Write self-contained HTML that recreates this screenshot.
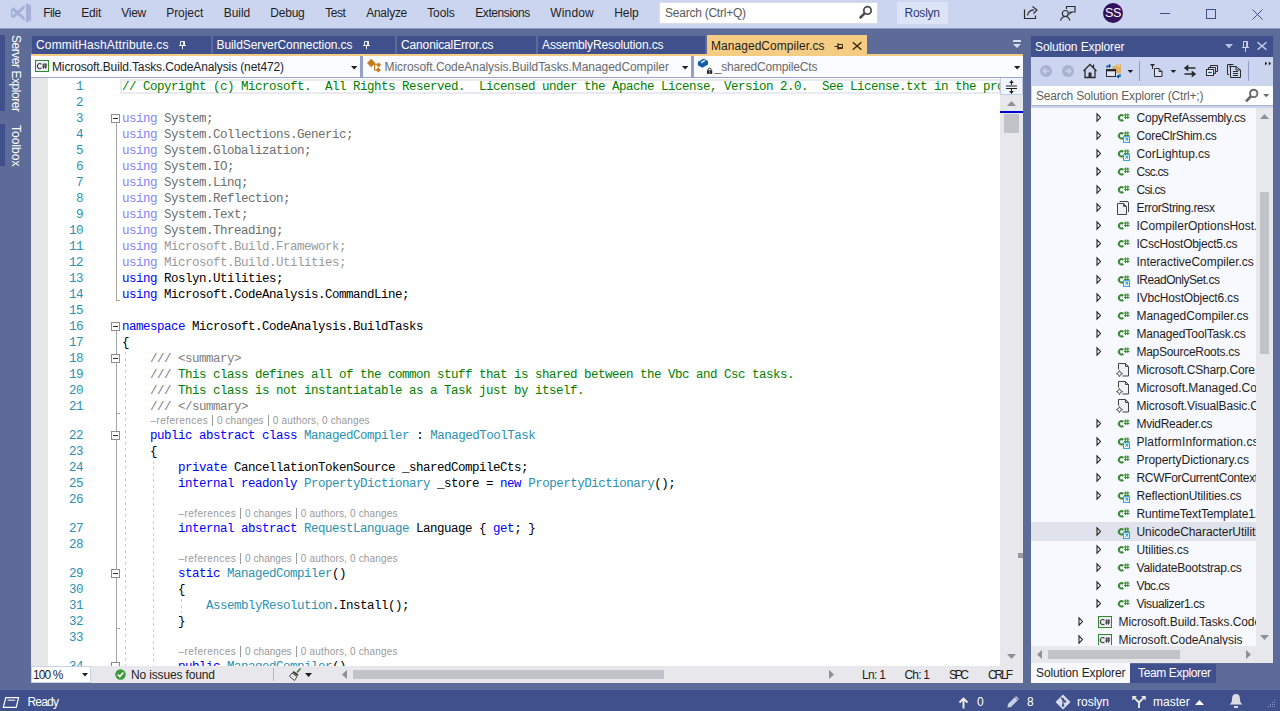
<!DOCTYPE html>
<html><head><meta charset="utf-8"><title>VS</title><style>
*{box-sizing:border-box;margin:0;padding:0}
html,body{width:1280px;height:711px;overflow:hidden;background:#5D6B99;font-family:"Liberation Sans",sans-serif;font-size:12px;color:#1e1e1e}
.a{position:absolute;white-space:pre}
#title{left:0;top:0;width:1280px;height:28px;background:#CCD5F0}
.menu{top:5px;font-size:12.4px;color:#1e1e1e;line-height:16px}
.code{position:absolute;left:122px;height:16px;margin-top:1px;line-height:16px;white-space:pre;font-family:"Liberation Mono",monospace;font-size:12.5px;letter-spacing:-0.501px;color:#000}
.ln{position:absolute;left:40px;width:43px;text-align:right;height:16px;margin-top:1px;line-height:16px;font-family:"Liberation Mono",monospace;font-size:12.5px;letter-spacing:-0.501px;color:#2B91AF}
.k{color:#0000FF}.ty{color:#2B91AF}.c{color:#008000}.x{color:#808080}
.fk{color:#8585FF}.fn{color:#6E6E6E}.fh{color:#9B9B9B}
.lens{position:absolute;height:13px;line-height:13px;font-size:9.6px;color:#8c8c8c;white-space:pre}
.tab{position:absolute;top:36px;height:18px;background:#40508D;color:#fff;font-size:12px;line-height:18px;white-space:pre}
.tree{position:absolute;left:1136px;height:18px;line-height:18px;font-size:12px;color:#1e1e1e;white-space:pre}
.sb{position:absolute;top:693px;height:16px;line-height:16px;font-size:12px;color:#fff;white-space:pre}
.br{position:absolute;top:667px;height:16px;line-height:16px;font-size:12px;color:#1e1e1e;white-space:pre}
</style></head><body>
<div class="a" id="title"></div>
<svg class="a" style="left:0;top:0" width="40" height="28" viewBox="0 0 40 28"><g fill="#A4B0D5"><path d="M26 3 L31 5.600 V20.200 L26 22.800 Z"/><path d="M11.300 9.200 L13.400 7.300 L24.600 17.300 V21 Z"/><path d="M11.300 16.600 L24.600 4.800 V8.500 L13.400 18.500 Z"/><path d="M10.800 9.400 L12.400 8.600 V17.200 L10.800 16.400 Z"/></g></svg>
<div class="a" style="left:43.20px;top:5px;font-size:12px;line-height:16px;color:#1e1e1e;letter-spacing:-0.411px;">File</div>
<div class="a" style="left:81.20px;top:5px;font-size:12px;line-height:16px;color:#1e1e1e;letter-spacing:-0.192px;">Edit</div>
<div class="a" style="left:121.20px;top:5px;font-size:12px;line-height:16px;color:#1e1e1e;letter-spacing:-0.241px;">View</div>
<div class="a" style="left:166.20px;top:5px;font-size:12px;line-height:16px;color:#1e1e1e;letter-spacing:-0.041px;">Project</div>
<div class="a" style="left:223.70px;top:5px;font-size:12px;line-height:16px;color:#1e1e1e;letter-spacing:-0.022px;">Build</div>
<div class="a" style="left:270.20px;top:5px;font-size:12px;line-height:16px;color:#1e1e1e;letter-spacing:-0.191px;">Debug</div>
<div class="a" style="left:325.20px;top:5px;font-size:12px;line-height:16px;color:#1e1e1e;letter-spacing:-0.469px;">Test</div>
<div class="a" style="left:366.20px;top:5px;font-size:12px;line-height:16px;color:#1e1e1e;letter-spacing:-0.266px;">Analyze</div>
<div class="a" style="left:427.20px;top:5px;font-size:12px;line-height:16px;color:#1e1e1e;letter-spacing:-0.102px;">Tools</div>
<div class="a" style="left:475.20px;top:5px;font-size:12px;line-height:16px;color:#1e1e1e;letter-spacing:-0.400px;">Extensions</div>
<div class="a" style="left:550.20px;top:5px;font-size:12px;line-height:16px;color:#1e1e1e;letter-spacing:0.178px;">Window</div>
<div class="a" style="left:614.20px;top:5px;font-size:12px;line-height:16px;color:#1e1e1e;letter-spacing:-0.028px;">Help</div>
<div class="a" style="left:659px;top:2px;width:219px;height:21.5px;background:#fff;border:1px solid #D9DDEA"></div>
<div class="a" style="left:665.00px;top:5px;font-size:12px;line-height:16px;color:#5a5a5a;letter-spacing:-0.239px;">Search (Ctrl+Q)</div>
<svg class="a" style="left:858px;top:5px" width="15" height="15" viewBox="0 0 15 15"><circle cx="9.500" cy="5.400" r="3.700" fill="none" stroke="#4a4a4a" stroke-width="1.800"/><path d="M6.800 8.200 L1.800 13.200" stroke="#4a4a4a" stroke-width="2.600"/></svg>
<div class="a" style="left:897px;top:2px;width:51px;height:22px;background:#DCE3F6"></div>
<div class="a" style="left:904.50px;top:5px;font-size:12px;line-height:16px;color:#2a3a7a;letter-spacing:-0.237px;">Roslyn</div>
<svg class="a" style="left:1022px;top:5px" width="18" height="16" viewBox="0 0 18 16"><path d="M2.500 4.500 V13.500 H13.500 V10.500" fill="none" stroke="#2b2b2b" stroke-width="1.200"/><path d="M5.500 10.500 C6 7 8.500 5 12 4.800 M10.500 1.500 L15 5 L11.500 8.500" fill="none" stroke="#2b2b2b" stroke-width="1.200"/></svg>
<svg class="a" style="left:1059px;top:5px" width="18" height="17" viewBox="0 0 18 17"><circle cx="6.300" cy="8.500" r="3" fill="none" stroke="#2b2b2b" stroke-width="1.200"/><path d="M1.500 15.500 C2.500 12.500 4 11.500 6.300 11.500 C8.600 11.500 10 12.500 11 15.500" fill="none" stroke="#2b2b2b" stroke-width="1.200"/><path d="M7.500 4 V1.500 H16 V7 H12.500 L11 8.500 V7 H10.500" fill="none" stroke="#2b2b2b" stroke-width="1.200"/></svg>
<div class="a" style="left:1103px;top:3px;width:20px;height:20px;border-radius:10px;background:#33125C;color:#fff;font-size:12.5px;line-height:20px;text-align:center;letter-spacing:-0.300px">SS</div>
<div class="a" style="left:1160px;top:13px;width:10px;height:1px;background:#3F4F8C"></div>
<div class="a" style="left:1206px;top:9px;width:10px;height:10px;border:1px solid #3F4F8C"></div>
<svg class="a" style="left:1252px;top:9px" width="11" height="11" viewBox="0 0 11 11"><path d="M0.500 0.500 L10.500 10.500 M10.500 0.500 L0.500 10.500" stroke="#3F4F8C" stroke-width="1" fill="none"/></svg>
<div class="a" style="left:0;top:28px;width:1280px;height:1px;background:#8F9AC2"></div>
<div class="a" style="left:0;top:35px;width:5px;height:76px;background:#40508D"></div>
<div class="a" style="left:0;top:124px;width:5px;height:42px;background:#40508D"></div>
<div class="a" style="left:24.00px;top:35px;font-size:12px;line-height:16px;color:#fff;letter-spacing:-0.455px;transform-origin:0 0;transform:rotate(90deg);">Server Explorer</div>
<div class="a" style="left:24.00px;top:124.5px;font-size:12px;line-height:16px;color:#fff;letter-spacing:0.023px;transform-origin:0 0;transform:rotate(90deg);">Toolbox</div>
<div class="tab" style="left:32px;width:179px"></div>
<div class="a" style="left:36.00px;top:37px;font-size:12px;line-height:16px;color:#fff;letter-spacing:0.149px;">CommitHashAttribute.cs</div>
<svg class="a" style="left:178px;top:41px" width="9" height="11" viewBox="0 0 9 11"><path d="M2.500 0.500 H6.500 V4.500 H2.500 Z M5.600 0.500 V4.500 M1 4.500 H8 M4.500 4.500 V8.200" fill="none" stroke="#F0F4FF" stroke-width="1"/></svg>
<div class="tab" style="left:213px;width:182px"></div>
<div class="a" style="left:216.50px;top:37px;font-size:12px;line-height:16px;color:#fff;letter-spacing:-0.090px;">BuildServerConnection.cs</div>
<svg class="a" style="left:361.5px;top:41px" width="9" height="11" viewBox="0 0 9 11"><path d="M2.500 0.500 H6.500 V4.500 H2.500 Z M5.600 0.500 V4.500 M1 4.500 H8 M4.500 4.500 V8.200" fill="none" stroke="#F0F4FF" stroke-width="1"/></svg>
<div class="tab" style="left:397px;width:139px"></div>
<div class="a" style="left:401.00px;top:37px;font-size:12px;line-height:16px;color:#fff;letter-spacing:-0.138px;">CanonicalError.cs</div>
<div class="tab" style="left:538px;width:167px"></div>
<div class="a" style="left:542.00px;top:37px;font-size:12px;line-height:16px;color:#fff;letter-spacing:-0.127px;">AssemblyResolution.cs</div>
<div class="tab" style="left:707px;top:35px;width:160px;background:#F5CC84;height:21px"></div>
<div class="a" style="left:711.00px;top:38px;font-size:12px;line-height:16px;color:#1e1e1e;letter-spacing:0.045px;">ManagedCompiler.cs</div>
<svg class="a" style="left:834px;top:42px" width="11" height="9" viewBox="0 0 11 9"><path d="M8.500 2.500 V6.500 H4 V2.500 Z M8.500 5.600 H4 M4 1 V8 M4 4.500 H0.500" fill="none" stroke="#3a2a08" stroke-width="1"/></svg>
<svg class="a" style="left:852px;top:41px" width="11" height="11" viewBox="0 0 11 11"><path d="M0.800 1.200 L9.400 8.800 M9.400 1.200 L0.800 8.800" stroke="#3a2a08" stroke-width="1.400" fill="none"/></svg>
<svg class="a" style="left:1012px;top:39px" width="10" height="10" viewBox="0 0 10 10"><path d="M1 1 H9 V3 H1 Z M1 5 H9 L5 9 Z" fill="#D5DCF0"/></svg>
<div class="a" style="left:31px;top:54px;width:992px;height:2px;background:#F5CC84"></div>
<div class="a" style="left:31px;top:56px;width:992px;height:22px;background:#FBFCFF;border-bottom:1px solid #9AA6CF"></div>
<div class="a" style="left:360px;top:56px;width:3px;height:22px;background:#93A0CB"></div>
<div class="a" style="left:691px;top:56px;width:3px;height:22px;background:#93A0CB"></div>
<svg class="a" style="left:35px;top:60px" width="15" height="13" viewBox="0 0 15 13"><rect x="0.500" y="0.500" width="13" height="11" fill="#EDEDF5" stroke="#2F8A2F"/><path d="M6.400 4.300 A2.300 2.600 0 1 0 6.400 7.900" fill="none" stroke="#3c3c3c" stroke-width="1.100"/><path d="M8.900 3.200 L8.500 8.600 M10.900 3.200 L10.500 8.600 M7.300 4.900 H12.200 M7.100 6.900 H12" fill="none" stroke="#3c3c3c" stroke-width="1"/></svg>
<div class="a" style="left:52.00px;top:59px;font-size:12px;line-height:16px;color:#1e1e1e;letter-spacing:-0.129px;">Microsoft.Build.Tasks.CodeAnalysis (net472)</div>
<svg class="a" style="left:350.8px;top:66px" width="7" height="4" viewBox="0 0 7 4"><path d="M0 0 H6.400 L3.200 3.400 Z" fill="#1e1e1e"/></svg>
<svg class="a" style="left:681.8px;top:66px" width="7" height="4" viewBox="0 0 7 4"><path d="M0 0 H6.400 L3.200 3.400 Z" fill="#1e1e1e"/></svg>
<svg class="a" style="left:1013.5px;top:66px" width="7" height="4" viewBox="0 0 7 4"><path d="M0 0 H6.400 L3.200 3.400 Z" fill="#1e1e1e"/></svg>
<svg class="a" style="left:366px;top:58px" width="16" height="16" viewBox="0 0 16 16"><path d="M5.200 0.800 L9.400 5 L5.200 9.200 L1 5 Z" fill="#C27D1A"/><path d="M7.500 6.200 H11 M8.600 6.200 V12 H10.500" fill="none" stroke="#C27D1A" stroke-width="1.200"/><path d="M12.700 4.600 L15.100 7 L12.700 9.400 L10.300 7 Z M12.300 9.400 L14.900 12 L12.300 14.600 L9.700 12 Z" fill="#C27D1A"/></svg>
<div class="a" style="left:384.50px;top:59px;font-size:12px;line-height:16px;color:#6a6a6a;letter-spacing:-0.062px;">Microsoft.CodeAnalysis.BuildTasks.ManagedCompiler</div>
<svg class="a" style="left:697px;top:58px" width="16" height="16" viewBox="0 0 16 16"><path d="M0.900 4 L6.600 0.800 L11 3.300 V6.500 L5.300 9.700 L0.900 7.200 Z" fill="#0E5BA9"/><path d="M0.900 4 L6.600 0.800 L11 3.300 L5.300 6.500 Z" fill="#1B69B6"/><path d="M4.600 4.300 L7.400 2.700" stroke="#E6EEF8" stroke-width="1.400" stroke-linecap="round"/><rect x="10" y="12.300" width="5.200" height="3.500" fill="#222"/><path d="M11.100 12.300 V11.600 a1.500 1.500 0 0 1 3 0 V12.300" fill="none" stroke="#222" stroke-width="1"/><rect x="12.100" y="13.400" width="1" height="1.200" fill="#fff"/></svg>
<div class="a" style="left:714.69px;top:59px;font-size:12px;line-height:16px;color:#6a6a6a;letter-spacing:-0.161px;">_sharedCompileCts</div>
<div class="a" style="left:31px;top:78px;width:992px;height:588px;background:#fff;overflow:hidden">
<div class="a" style="left:-31px;top:-78px;width:1280px;height:711px">
<div class="a" style="left:31px;top:77px;width:17px;height:589px;background:#E6E7E8"></div>
<div class="a" style="left:120px;top:79px;width:881px;height:15px;border:2px solid #EAEAF2;background:#fff"></div>
<div class="a" style="left:116px;top:122px;width:1px;height:179px;background:#A5A5A5"></div>
<div class="a" style="left:116px;top:300px;width:4px;height:1px;background:#A5A5A5"></div>
<div class="a" style="left:116px;top:330px;width:1px;height:340px;background:#A5A5A5"></div>
<div class="a" style="left:116px;top:413px;width:4px;height:1px;background:#A5A5A5"></div>
<div class="a" style="left:116px;top:628px;width:4px;height:1px;background:#A5A5A5"></div>
<div class="a" style="left:125px;top:350px;width:1px;height:316px;background:repeating-linear-gradient(to bottom,transparent 0,transparent 2px,#CDCDC4 2px,#CDCDC4 5px,transparent 5px,transparent 6px)"></div>
<div class="a" style="left:153px;top:459px;width:1px;height:207px;background:repeating-linear-gradient(to bottom,transparent 0,transparent 2px,#CDCDC4 2px,#CDCDC4 5px,transparent 5px,transparent 6px)"></div>
<div class="a" style="left:181px;top:597px;width:1px;height:16px;background:repeating-linear-gradient(to bottom,transparent 0,transparent 2px,#CDCDC4 2px,#CDCDC4 5px,transparent 5px,transparent 6px)"></div>
<div class="a" style="left:100px;top:77px;width:900px;height:589px;overflow:hidden"><div class="a" style="left:-100px;top:-77px;width:1280px;height:711px">
<div class="code" style="top:78px"><span class="c">// Copyright (c) Microsoft.  All Rights Reserved.  Licensed under the Apache License, Version 2.0.  See License.txt in the project root for license information.</span></div>
<div class="code" style="top:110px"><span class="fk">using</span> <span class="fn">System;</span></div>
<div class="code" style="top:126px"><span class="fk">using</span> <span class="fn">System.Collections.Generic;</span></div>
<div class="code" style="top:142px"><span class="fk">using</span> <span class="fn">System.Globalization;</span></div>
<div class="code" style="top:158px"><span class="fk">using</span> <span class="fn">System.IO;</span></div>
<div class="code" style="top:174px"><span class="fk">using</span> <span class="fn">System.Linq;</span></div>
<div class="code" style="top:190px"><span class="fk">using</span> <span class="fn">System.Reflection;</span></div>
<div class="code" style="top:206px"><span class="fk">using</span> <span class="fn">System.Text;</span></div>
<div class="code" style="top:222px"><span class="fk">using</span> <span class="fn">System.Threading;</span></div>
<div class="code" style="top:238px"><span class="fk">using</span> <span class="fh">Microsoft.Build.Framework;</span></div>
<div class="code" style="top:254px"><span class="fk">using</span> <span class="fh">Microsoft.Build.Utilities;</span></div>
<div class="code" style="top:270px"><span class="k">using</span> Roslyn.Utilities;</div>
<div class="code" style="top:286px"><span class="k">using</span> Microsoft.CodeAnalysis.CommandLine;</div>
<div class="code" style="top:318px"><span class="k">namespace</span> Microsoft.CodeAnalysis.BuildTasks</div>
<div class="code" style="top:334px">{</div>
<div class="code" style="top:350px">    <span class="x">/// &lt;summary&gt;</span></div>
<div class="code" style="top:366px">    <span class="x">///</span> <span class="c">This class defines all of the common stuff that is shared between the Vbc and Csc tasks.</span></div>
<div class="code" style="top:382px">    <span class="x">///</span> <span class="c">This class is not instantiatable as a Task just by itself.</span></div>
<div class="code" style="top:398px">    <span class="x">/// &lt;/summary&gt;</span></div>
<div class="code" style="top:427px">    <span class="k">public</span> <span class="k">abstract</span> <span class="k">class</span> <span class="ty">ManagedCompiler</span> : <span class="ty">ManagedToolTask</span></div>
<div class="code" style="top:443px">    {</div>
<div class="code" style="top:459px">        <span class="k">private</span> CancellationTokenSource _sharedCompileCts;</div>
<div class="code" style="top:475px">        <span class="k">internal</span> <span class="k">readonly</span> <span class="ty">PropertyDictionary</span> _store = <span class="k">new</span> <span class="ty">PropertyDictionary</span>();</div>
<div class="code" style="top:520px">        <span class="k">internal</span> <span class="k">abstract</span> <span class="ty">RequestLanguage</span> Language { <span class="k">get</span>; }</div>
<div class="code" style="top:565px">        <span class="k">static</span> <span class="ty">ManagedCompiler</span>()</div>
<div class="code" style="top:581px">        {</div>
<div class="code" style="top:597px">            <span class="ty">AssemblyResolution</span>.Install();</div>
<div class="code" style="top:613px">        }</div>
<div class="code" style="top:658px">        <span class="k">public</span> <span class="ty">ManagedCompiler</span>()</div>
<div class="a" style="left:150.40px;top:414px;font-size:10px;line-height:13px;color:#999999;letter-spacing:0.459px;">–references</div>
<div class="a" style="left:212px;top:415px;width:1px;height:11px;background:#9c9c9c"></div>
<div class="a" style="left:217.00px;top:414px;font-size:10px;line-height:13px;color:#999999;letter-spacing:0.056px;">0 changes</div>
<div class="a" style="left:268px;top:415px;width:1px;height:11px;background:#9c9c9c"></div>
<div class="a" style="left:272.80px;top:414px;font-size:10px;line-height:13px;color:#999999;letter-spacing:0.174px;">0 authors, 0 changes</div>
<div class="a" style="left:178.40px;top:507px;font-size:10px;line-height:13px;color:#999999;letter-spacing:0.459px;">–references</div>
<div class="a" style="left:240px;top:508px;width:1px;height:11px;background:#9c9c9c"></div>
<div class="a" style="left:245.00px;top:507px;font-size:10px;line-height:13px;color:#999999;letter-spacing:0.056px;">0 changes</div>
<div class="a" style="left:296px;top:508px;width:1px;height:11px;background:#9c9c9c"></div>
<div class="a" style="left:300.80px;top:507px;font-size:10px;line-height:13px;color:#999999;letter-spacing:0.174px;">0 authors, 0 changes</div>
<div class="a" style="left:178.40px;top:552px;font-size:10px;line-height:13px;color:#999999;letter-spacing:0.459px;">–references</div>
<div class="a" style="left:240px;top:553px;width:1px;height:11px;background:#9c9c9c"></div>
<div class="a" style="left:245.00px;top:552px;font-size:10px;line-height:13px;color:#999999;letter-spacing:0.056px;">0 changes</div>
<div class="a" style="left:296px;top:553px;width:1px;height:11px;background:#9c9c9c"></div>
<div class="a" style="left:300.80px;top:552px;font-size:10px;line-height:13px;color:#999999;letter-spacing:0.174px;">0 authors, 0 changes</div>
<div class="a" style="left:178.40px;top:645px;font-size:10px;line-height:13px;color:#999999;letter-spacing:0.459px;">–references</div>
<div class="a" style="left:240px;top:646px;width:1px;height:11px;background:#9c9c9c"></div>
<div class="a" style="left:245.00px;top:645px;font-size:10px;line-height:13px;color:#999999;letter-spacing:0.056px;">0 changes</div>
<div class="a" style="left:296px;top:646px;width:1px;height:11px;background:#9c9c9c"></div>
<div class="a" style="left:300.80px;top:645px;font-size:10px;line-height:13px;color:#999999;letter-spacing:0.174px;">0 authors, 0 changes</div>
</div></div>
<div class="ln" style="top:78px">1</div>
<div class="ln" style="top:94px">2</div>
<div class="ln" style="top:110px">3</div>
<div class="ln" style="top:126px">4</div>
<div class="ln" style="top:142px">5</div>
<div class="ln" style="top:158px">6</div>
<div class="ln" style="top:174px">7</div>
<div class="ln" style="top:190px">8</div>
<div class="ln" style="top:206px">9</div>
<div class="ln" style="top:222px">10</div>
<div class="ln" style="top:238px">11</div>
<div class="ln" style="top:254px">12</div>
<div class="ln" style="top:270px">13</div>
<div class="ln" style="top:286px">14</div>
<div class="ln" style="top:302px">15</div>
<div class="ln" style="top:318px">16</div>
<div class="ln" style="top:334px">17</div>
<div class="ln" style="top:350px">18</div>
<div class="ln" style="top:366px">19</div>
<div class="ln" style="top:382px">20</div>
<div class="ln" style="top:398px">21</div>
<div class="ln" style="top:427px">22</div>
<div class="ln" style="top:443px">23</div>
<div class="ln" style="top:459px">24</div>
<div class="ln" style="top:475px">25</div>
<div class="ln" style="top:491px">26</div>
<div class="ln" style="top:520px">27</div>
<div class="ln" style="top:536px">28</div>
<div class="ln" style="top:565px">29</div>
<div class="ln" style="top:581px">30</div>
<div class="ln" style="top:597px">31</div>
<div class="ln" style="top:613px">32</div>
<div class="ln" style="top:629px">33</div>
<div class="ln" style="top:658px">34</div>
<svg class="a" style="left:111px;top:114px" width="9" height="9" viewBox="0 0 9 9"><rect x="0.5" y="0.5" width="8" height="8" fill="#fff" stroke="#8C8C8C"/><path d="M2 4.5 H7" stroke="#333" stroke-width="1"/></svg>
<svg class="a" style="left:111px;top:322px" width="9" height="9" viewBox="0 0 9 9"><rect x="0.5" y="0.5" width="8" height="8" fill="#fff" stroke="#8C8C8C"/><path d="M2 4.5 H7" stroke="#333" stroke-width="1"/></svg>
<svg class="a" style="left:111px;top:354px" width="9" height="9" viewBox="0 0 9 9"><rect x="0.5" y="0.5" width="8" height="8" fill="#fff" stroke="#8C8C8C"/><path d="M2 4.5 H7" stroke="#333" stroke-width="1"/></svg>
<svg class="a" style="left:111px;top:431px" width="9" height="9" viewBox="0 0 9 9"><rect x="0.5" y="0.5" width="8" height="8" fill="#fff" stroke="#8C8C8C"/><path d="M2 4.5 H7" stroke="#333" stroke-width="1"/></svg>
<svg class="a" style="left:111px;top:569px" width="9" height="9" viewBox="0 0 9 9"><rect x="0.5" y="0.5" width="8" height="8" fill="#fff" stroke="#8C8C8C"/><path d="M2 4.5 H7" stroke="#333" stroke-width="1"/></svg>
<svg class="a" style="left:111px;top:662px" width="9" height="9" viewBox="0 0 9 9"><rect x="0.5" y="0.5" width="8" height="8" fill="#fff" stroke="#8C8C8C"/><path d="M2 4.5 H7" stroke="#333" stroke-width="1"/></svg>
<div class="a" style="left:1000px;top:77px;width:23px;height:589px;background:#E8E8EC"></div>
<div class="a" style="left:1000px;top:77px;width:23px;height:18px;background:#F2F4FB;border:1px solid #C3CCE8"></div>
<svg class="a" style="left:1005px;top:80px" width="13" height="14" viewBox="0 0 13 14"><path d="M1 6 H12 M1 8.5 H12" stroke="#1e1e1e" stroke-width="1"/><path d="M6.5 0.5 V5 M6.5 9 V13.5" stroke="#1e1e1e" stroke-width="1"/><path d="M4.5 3 L6.5 0.5 L8.5 3 M4.5 11 L6.5 13.5 L8.5 11" fill="#1e1e1e" stroke="#1e1e1e" stroke-width="0.6"/></svg>
<svg class="a" style="left:1007px;top:101px" width="9" height="5" viewBox="0 0 9 5"><path d="M0 5 L4.5 0 L9 5 Z" fill="#8F8F98"/></svg>
<div class="a" style="left:1000px;top:111px;width:23px;height:2px;background:#0000CD"></div>
<div class="a" style="left:1004px;top:114px;width:15px;height:19px;background:#C2C3C9"></div>
<div class="a" style="left:1018px;top:553px;width:5px;height:5px;background:#9A9AA0"></div>
<svg class="a" style="left:1007px;top:654px" width="9" height="5" viewBox="0 0 9 5"><path d="M0 0 L4.5 5 L9 0 Z" fill="#8F8F98"/></svg>
</div></div>
<div class="a" style="left:31px;top:666px;width:992px;height:17px;background:#E8E8EC"></div>
<div class="a" style="left:31px;top:666px;width:60px;height:17px;background:#fff;border:1px solid #C9D0E8"></div>
<div class="a" style="left:33.00px;top:667px;font-size:12px;line-height:16px;color:#1e1e1e;letter-spacing:-0.880px;">100 %</div>
<svg class="a" style="left:82px;top:673px" width="6" height="4" viewBox="0 0 6 4"><path d="M0 0 H6 L3 3.500 Z" fill="#1e1e1e"/></svg>
<svg class="a" style="left:115px;top:669px" width="11" height="11" viewBox="0 0 11 11"><circle cx="5.500" cy="5.500" r="5.200" fill="#3A9B3A"/><path d="M2.800 5.600 L4.800 7.600 L8.300 3.600" fill="none" stroke="#fff" stroke-width="1.500"/></svg>
<div class="a" style="left:131.00px;top:667px;font-size:12px;line-height:16px;color:#1e1e1e;letter-spacing:-0.147px;">No issues found</div>
<div class="a" style="left:273px;top:668px;width:1px;height:13px;background:#B5B8C8"></div>
<svg class="a" style="left:288px;top:668px" width="14" height="13" viewBox="0 0 14 13"><path d="M12.500 0.500 L9 4.500" stroke="#3A6B2A" stroke-width="1.300"/><path d="M5.500 3 L10.500 6.500 L9.500 8 L4.500 4.500 Z" fill="#333"/><path d="M4 5 L9 8.500 L6.500 12.500 L1.500 8.500 Z" fill="#F4F4F4" stroke="#333" stroke-width="0.900"/><path d="M4 8 L5.500 9.200 M5.500 6.500 L7.500 8" stroke="#888" stroke-width="0.700"/></svg>
<svg class="a" style="left:305px;top:673px" width="7" height="4" viewBox="0 0 7 4"><path d="M0 0 H7 L3.500 4 Z" fill="#1e1e1e"/></svg>
<svg class="a" style="left:342px;top:670px" width="5" height="9" viewBox="0 0 5 9"><path d="M5 0 L0 4.500 L5 9 Z" fill="#8F8F98"/></svg>
<div class="a" style="left:353px;top:670px;width:311px;height:9px;background:#C2C3C9"></div>
<svg class="a" style="left:829px;top:670px" width="5" height="9" viewBox="0 0 5 9"><path d="M0 0 L5 4.500 L0 9 Z" fill="#8F8F98"/></svg>
<div class="a" style="left:862.00px;top:667px;font-size:12px;line-height:16px;color:#1e1e1e;letter-spacing:-0.672px;">Ln: 1</div>
<div class="a" style="left:904.50px;top:667px;font-size:12px;line-height:16px;color:#1e1e1e;letter-spacing:-0.795px;">Ch: 1</div>
<div class="a" style="left:949.00px;top:667px;font-size:12px;line-height:16px;color:#1e1e1e;letter-spacing:-2.336px;">SPC</div>
<div class="a" style="left:988.00px;top:667px;font-size:12px;line-height:16px;color:#1e1e1e;letter-spacing:-2.111px;">CRLF</div>
<div class="a" style="left:1031px;top:36px;width:242px;height:21px;background:#40508D"></div>
<div class="a" style="left:1035.00px;top:39px;font-size:12px;line-height:16px;color:#fff;letter-spacing:-0.117px;">Solution Explorer</div>
<svg class="a" style="left:1225px;top:44px" width="8" height="5" viewBox="0 0 8 5"><path d="M0 0 H8 L4 4.5 Z" fill="#B7C0E0"/></svg>
<svg class="a" style="left:1241px;top:41px" width="9" height="12" viewBox="0 0 9 12"><path d="M2.500 0.500 H6.500 V6.500 H2.500 Z M5.600 0.500 V6.500 M1 6.500 H8 M4.500 6.500 V11" fill="none" stroke="#CAD2EC" stroke-width="1"/></svg>
<svg class="a" style="left:1257px;top:41px" width="10" height="10" viewBox="0 0 10 10"><path d="M0.500 1.300 L9.500 8.700 M9.500 1.300 L0.500 8.700" stroke="#CAD2EC" stroke-width="1.400" fill="none"/></svg>
<div class="a" style="left:1031px;top:57px;width:242px;height:51px;background:#CCD5F0"></div>
<svg class="a" style="left:1040px;top:65px" width="12" height="12" viewBox="0 0 12 12"><circle cx="6" cy="6" r="6" fill="#A9B1CF"/><path d="M3.5 6 H9 M6 3.2 L3.2 6 L6 8.8" fill="none" stroke="#C9D1EA" stroke-width="1.6"/></svg>
<svg class="a" style="left:1062px;top:65px" width="12" height="12" viewBox="0 0 12 12"><circle cx="6" cy="6" r="6" fill="#A9B1CF"/><path d="M3 6 H8.5 M6 3.2 L8.8 6 L6 8.8" fill="none" stroke="#C9D1EA" stroke-width="1.6"/></svg>
<svg class="a" style="left:1082px;top:63px" width="16" height="16" viewBox="0 0 16 16"><path d="M1.5 8 L8 1.5 L14.5 8 M3 7 V14.5 H13 V7 M11.5 4.5 V1.5" fill="none" stroke="#2b2b2b" stroke-width="1.3"/><rect x="6.5" y="9.5" width="3" height="5" fill="#2b2b2b"/></svg>
<svg class="a" style="left:1105px;top:63px" width="17" height="16" viewBox="0 0 17 16"><path d="M7.500 3 H10.500 L11.500 1.500 H16 V10 H7.500 Z" fill="#DCB067"/><path d="M12 2.500 H15 V3.500 H12 Z" fill="#F3DFB8"/><rect x="1.500" y="6.500" width="9" height="7" fill="#DFE4F5" stroke="#2b2b2b"/><path d="M1.5 7.5 H10.5" stroke="#2b2b2b" stroke-width="1.6"/><path d="M2 5 V3 H5 M3.8 1.5 L5.3 3 L3.8 4.5" fill="none" stroke="#00539C" stroke-width="1.2"/><path d="M15 11 V13.5 H12.5 M13.8 12 L12.3 13.5 L13.8 15" fill="none" stroke="#00539C" stroke-width="1.2"/></svg>
<svg class="a" style="left:1127px;top:70px" width="7" height="4" viewBox="0 0 7 4"><path d="M0.600 0 H6.200 L3.400 3.100 Z" fill="#1e1e1e"/></svg>
<div class="a" style="left:1139px;top:61px;width:1px;height:20px;background:#8E9BC6"></div>
<svg class="a" style="left:1149px;top:63px" width="15" height="15" viewBox="0 0 15 15"><path d="M1 1 H6 L3.5 4 Z" fill="#2b2b2b"/><path d="M3.5 3 V6" stroke="#2b2b2b"/><path d="M5.5 5.5 H10 L13 8.5 V13.5 H5.5 Z" fill="#DFE4F5" stroke="#2b2b2b"/><path d="M10 5.5 V8.5 H13" fill="none" stroke="#2b2b2b"/></svg>
<svg class="a" style="left:1170px;top:70px" width="7" height="4" viewBox="0 0 7 4"><path d="M0.600 0 H6.200 L3.400 3.100 Z" fill="#1e1e1e"/></svg>
<svg class="a" style="left:1183px;top:64px" width="14" height="14" viewBox="0 0 14 14"><path d="M12.500 4 H4 M1.500 10 H10" fill="none" stroke="#2b2b2b" stroke-width="1.700"/><path d="M5.300 0.600 V7.400 L0.800 4 Z M8.700 6.600 V13.400 L13.200 10 Z" fill="#2b2b2b"/></svg>
<svg class="a" style="left:1205px;top:64px" width="14" height="13" viewBox="0 0 14 13"><path d="M5.5 3 V1.5 H12.5 V7.5 H11 M3.5 5 V3.5 H10.5 V9.5 H9" fill="none" stroke="#2b2b2b"/><rect x="1.5" y="5.500" width="7" height="6" fill="#EEF1FA" stroke="#2b2b2b"/><path d="M3.2 8.5 H6.8" stroke="#00539C" stroke-width="1.4"/></svg>
<svg class="a" style="left:1226px;top:63px" width="16" height="16" viewBox="0 0 16 16"><path d="M3 11.500 H1.500 V1.500 H7.500 M4 4.500 V2 " fill="none" stroke="#2b2b2b"/><path d="M4.5 3.5 H10 L14.500 7 V14.500 H4.500 Z" fill="none" stroke="#2b2b2b"/><path d="M7 8.500 H12 M7 10.500 H12 M7 12.500 H12" stroke="#2b2b2b" stroke-width="1"/><path d="M10 3.500 V7 H14.500" fill="none" stroke="#2b2b2b"/></svg>
<div class="a" style="left:1248px;top:61px;width:1px;height:20px;background:#8E9BC6"></div>
<svg class="a" style="left:1264px;top:61px" width="8" height="5" viewBox="0 0 8 5"><path d="M1 0.600 L3.200 2.500 L1 4.400 Z M4.800 0.600 L7 2.500 L4.800 4.400 Z" fill="#1e1e1e"/></svg>
<div class="a" style="left:1032px;top:86px;width:241px;height:20px;background:#fff;border-bottom:1px solid #A9B0C8"></div>
<div class="a" style="left:1036.00px;top:88px;font-size:12px;line-height:16px;color:#5f5f5f;letter-spacing:-0.174px;">Search Solution Explorer (Ctrl+;)</div>
<svg class="a" style="left:1244px;top:88px" width="15" height="15" viewBox="0 0 15 15"><circle cx="9.700" cy="5.400" r="3.700" fill="none" stroke="#6a6a6a" stroke-width="1.900"/><path d="M7 8.200 L2 13.400" stroke="#6a6a6a" stroke-width="2.800"/></svg>
<svg class="a" style="left:1263px;top:94px" width="7" height="4" viewBox="0 0 7 4"><path d="M0.200 0 H6.200 L3.200 3.200 Z" fill="#6a6a6a"/></svg>
<div class="a" style="left:1031px;top:108px;width:242px;height:555px;background:#F8F9FE;overflow:hidden"><div class="a" style="left:-1031px;top:-108px;width:1280px;height:711px">
<div class="a" style="left:1031px;top:522px;width:225px;height:19px;background:#E1E3EC"></div>
<div class="a" style="left:1031px;top:108px;width:224.5px;height:537px;overflow:hidden"><div class="a" style="left:-1031px;top:-108px;width:1280px;height:711px">
<svg class="a" style="left:1095.5px;top:112px" width="7" height="11" viewBox="0 0 7 11"><path d="M1 1.800 L4.500 5.500 L1 9.200 Z" fill="none" stroke="#1a1a1a" stroke-width="1.050"/></svg>
<svg class="a" style="left:1116px;top:110px" width="16" height="16" viewBox="0 0 16 16"><path d="M7.3 5.9 A2.6 2.6 0 1 0 7.3 9.7" fill="none" stroke="#388A34" stroke-width="2"/><path d="M9.6 3.5 V9 M11.8 3.5 V9 M8 5 H13.4 M8 7.5 H13.4" fill="none" stroke="#388A34" stroke-width="1.1"/></svg>
<div class="tree" style="left:1136.50px;top:108.5px;letter-spacing:-0.226px">CopyRefAssembly.cs</div>
<svg class="a" style="left:1095.5px;top:130px" width="7" height="11" viewBox="0 0 7 11"><path d="M1 1.800 L4.500 5.500 L1 9.200 Z" fill="none" stroke="#1a1a1a" stroke-width="1.050"/></svg>
<svg class="a" style="left:1116px;top:128px" width="16" height="16" viewBox="0 0 16 16"><path d="M7.3 5.9 A2.6 2.6 0 1 0 7.3 9.7" fill="none" stroke="#388A34" stroke-width="2"/><path d="M9.6 3.5 V9 M11.8 3.5 V9 M8 5 H13.4 M8 7.5 H13.4" fill="none" stroke="#388A34" stroke-width="1.1"/><rect x="7.5" y="8.8" width="6" height="5.6" fill="#fff" stroke="#1BA1E2" stroke-width="1"/><path d="M9.3 10.4 H11.7 V12.8 M11.7 10.4 L9.2 12.9" fill="none" stroke="#1BA1E2" stroke-width="1"/></svg>
<div class="tree" style="left:1136.50px;top:126.5px;letter-spacing:-0.293px">CoreClrShim.cs</div>
<svg class="a" style="left:1095.5px;top:148px" width="7" height="11" viewBox="0 0 7 11"><path d="M1 1.800 L4.500 5.500 L1 9.200 Z" fill="none" stroke="#1a1a1a" stroke-width="1.050"/></svg>
<svg class="a" style="left:1116px;top:146px" width="16" height="16" viewBox="0 0 16 16"><path d="M7.3 5.9 A2.6 2.6 0 1 0 7.3 9.7" fill="none" stroke="#388A34" stroke-width="2"/><path d="M9.6 3.5 V9 M11.8 3.5 V9 M8 5 H13.4 M8 7.5 H13.4" fill="none" stroke="#388A34" stroke-width="1.1"/><rect x="7.5" y="8.8" width="6" height="5.6" fill="#fff" stroke="#1BA1E2" stroke-width="1"/><path d="M9.3 10.4 H11.7 V12.8 M11.7 10.4 L9.2 12.9" fill="none" stroke="#1BA1E2" stroke-width="1"/></svg>
<div class="tree" style="left:1136.50px;top:144.5px;letter-spacing:-0.045px">CorLightup.cs</div>
<svg class="a" style="left:1095.5px;top:166px" width="7" height="11" viewBox="0 0 7 11"><path d="M1 1.800 L4.500 5.500 L1 9.200 Z" fill="none" stroke="#1a1a1a" stroke-width="1.050"/></svg>
<svg class="a" style="left:1116px;top:164px" width="16" height="16" viewBox="0 0 16 16"><path d="M7.3 5.9 A2.6 2.6 0 1 0 7.3 9.7" fill="none" stroke="#388A34" stroke-width="2"/><path d="M9.6 3.5 V9 M11.8 3.5 V9 M8 5 H13.4 M8 7.5 H13.4" fill="none" stroke="#388A34" stroke-width="1.1"/></svg>
<div class="tree" style="left:1136.50px;top:162.5px;letter-spacing:-0.740px">Csc.cs</div>
<svg class="a" style="left:1095.5px;top:184px" width="7" height="11" viewBox="0 0 7 11"><path d="M1 1.800 L4.500 5.500 L1 9.200 Z" fill="none" stroke="#1a1a1a" stroke-width="1.050"/></svg>
<svg class="a" style="left:1116px;top:182px" width="16" height="16" viewBox="0 0 16 16"><path d="M7.3 5.9 A2.6 2.6 0 1 0 7.3 9.7" fill="none" stroke="#388A34" stroke-width="2"/><path d="M9.6 3.5 V9 M11.8 3.5 V9 M8 5 H13.4 M8 7.5 H13.4" fill="none" stroke="#388A34" stroke-width="1.1"/></svg>
<div class="tree" style="left:1136.50px;top:180.5px;letter-spacing:-0.673px">Csi.cs</div>
<svg class="a" style="left:1095.5px;top:202px" width="7" height="11" viewBox="0 0 7 11"><path d="M1 1.800 L4.500 5.500 L1 9.200 Z" fill="none" stroke="#1a1a1a" stroke-width="1.050"/></svg>
<svg class="a" style="left:1115px;top:200px" width="16" height="16" viewBox="0 0 16 16"><path d="M4.500 1.500 H12 Q13.500 1.500 13.500 3 V12" fill="none" stroke="#424242"/><path d="M2.500 3.500 H8.500 L11.500 6.500 V14.500 H2.500 Z" fill="#F0F0F6" stroke="#424242"/><path d="M8.500 3.500 V6.500 H11.500 Z" fill="#424242" stroke="#424242" stroke-width="0.600"/></svg>
<div class="tree" style="left:1136.50px;top:198.5px;letter-spacing:-0.368px">ErrorString.resx</div>
<svg class="a" style="left:1095.5px;top:220px" width="7" height="11" viewBox="0 0 7 11"><path d="M1 1.800 L4.500 5.500 L1 9.200 Z" fill="none" stroke="#1a1a1a" stroke-width="1.050"/></svg>
<svg class="a" style="left:1116px;top:218px" width="16" height="16" viewBox="0 0 16 16"><path d="M7.3 5.9 A2.6 2.6 0 1 0 7.3 9.7" fill="none" stroke="#388A34" stroke-width="2"/><path d="M9.6 3.5 V9 M11.8 3.5 V9 M8 5 H13.4 M8 7.5 H13.4" fill="none" stroke="#388A34" stroke-width="1.1"/></svg>
<div class="tree" style="left:1136.50px;top:216.5px;letter-spacing:0.012px">ICompilerOptionsHost.cs</div>
<svg class="a" style="left:1095.5px;top:238px" width="7" height="11" viewBox="0 0 7 11"><path d="M1 1.800 L4.500 5.500 L1 9.200 Z" fill="none" stroke="#1a1a1a" stroke-width="1.050"/></svg>
<svg class="a" style="left:1116px;top:236px" width="16" height="16" viewBox="0 0 16 16"><path d="M7.3 5.9 A2.6 2.6 0 1 0 7.3 9.7" fill="none" stroke="#388A34" stroke-width="2"/><path d="M9.6 3.5 V9 M11.8 3.5 V9 M8 5 H13.4 M8 7.5 H13.4" fill="none" stroke="#388A34" stroke-width="1.1"/></svg>
<div class="tree" style="left:1136.50px;top:234.5px;letter-spacing:-0.256px">ICscHostObject5.cs</div>
<svg class="a" style="left:1095.5px;top:256px" width="7" height="11" viewBox="0 0 7 11"><path d="M1 1.800 L4.500 5.500 L1 9.200 Z" fill="none" stroke="#1a1a1a" stroke-width="1.050"/></svg>
<svg class="a" style="left:1116px;top:254px" width="16" height="16" viewBox="0 0 16 16"><path d="M7.3 5.9 A2.6 2.6 0 1 0 7.3 9.7" fill="none" stroke="#388A34" stroke-width="2"/><path d="M9.6 3.5 V9 M11.8 3.5 V9 M8 5 H13.4 M8 7.5 H13.4" fill="none" stroke="#388A34" stroke-width="1.1"/></svg>
<div class="tree" style="left:1136.50px;top:252.5px;letter-spacing:-0.040px">InteractiveCompiler.cs</div>
<svg class="a" style="left:1095.5px;top:274px" width="7" height="11" viewBox="0 0 7 11"><path d="M1 1.800 L4.500 5.500 L1 9.200 Z" fill="none" stroke="#1a1a1a" stroke-width="1.050"/></svg>
<svg class="a" style="left:1116px;top:272px" width="16" height="16" viewBox="0 0 16 16"><path d="M7.3 5.9 A2.6 2.6 0 1 0 7.3 9.7" fill="none" stroke="#388A34" stroke-width="2"/><path d="M9.6 3.5 V9 M11.8 3.5 V9 M8 5 H13.4 M8 7.5 H13.4" fill="none" stroke="#388A34" stroke-width="1.1"/><rect x="7.5" y="8.8" width="6" height="5.6" fill="#fff" stroke="#1BA1E2" stroke-width="1"/><path d="M9.3 10.4 H11.7 V12.8 M11.7 10.4 L9.2 12.9" fill="none" stroke="#1BA1E2" stroke-width="1"/></svg>
<div class="tree" style="left:1136.50px;top:270.5px;letter-spacing:-0.467px">IReadOnlySet.cs</div>
<svg class="a" style="left:1095.5px;top:292px" width="7" height="11" viewBox="0 0 7 11"><path d="M1 1.800 L4.500 5.500 L1 9.200 Z" fill="none" stroke="#1a1a1a" stroke-width="1.050"/></svg>
<svg class="a" style="left:1116px;top:290px" width="16" height="16" viewBox="0 0 16 16"><path d="M7.3 5.9 A2.6 2.6 0 1 0 7.3 9.7" fill="none" stroke="#388A34" stroke-width="2"/><path d="M9.6 3.5 V9 M11.8 3.5 V9 M8 5 H13.4 M8 7.5 H13.4" fill="none" stroke="#388A34" stroke-width="1.1"/></svg>
<div class="tree" style="left:1136.50px;top:288.5px;letter-spacing:-0.175px">IVbcHostObject6.cs</div>
<svg class="a" style="left:1095.5px;top:310px" width="7" height="11" viewBox="0 0 7 11"><path d="M1 1.800 L4.500 5.500 L1 9.200 Z" fill="none" stroke="#1a1a1a" stroke-width="1.050"/></svg>
<svg class="a" style="left:1116px;top:308px" width="16" height="16" viewBox="0 0 16 16"><path d="M7.3 5.9 A2.6 2.6 0 1 0 7.3 9.7" fill="none" stroke="#388A34" stroke-width="2"/><path d="M9.6 3.5 V9 M11.8 3.5 V9 M8 5 H13.4 M8 7.5 H13.4" fill="none" stroke="#388A34" stroke-width="1.1"/></svg>
<div class="tree" style="left:1136.50px;top:306.5px;letter-spacing:-0.043px">ManagedCompiler.cs</div>
<svg class="a" style="left:1095.5px;top:328px" width="7" height="11" viewBox="0 0 7 11"><path d="M1 1.800 L4.500 5.500 L1 9.200 Z" fill="none" stroke="#1a1a1a" stroke-width="1.050"/></svg>
<svg class="a" style="left:1116px;top:326px" width="16" height="16" viewBox="0 0 16 16"><path d="M7.3 5.9 A2.6 2.6 0 1 0 7.3 9.7" fill="none" stroke="#388A34" stroke-width="2"/><path d="M9.6 3.5 V9 M11.8 3.5 V9 M8 5 H13.4 M8 7.5 H13.4" fill="none" stroke="#388A34" stroke-width="1.1"/></svg>
<div class="tree" style="left:1136.50px;top:324.5px;letter-spacing:-0.168px">ManagedToolTask.cs</div>
<svg class="a" style="left:1095.5px;top:346px" width="7" height="11" viewBox="0 0 7 11"><path d="M1 1.800 L4.500 5.500 L1 9.200 Z" fill="none" stroke="#1a1a1a" stroke-width="1.050"/></svg>
<svg class="a" style="left:1116px;top:344px" width="16" height="16" viewBox="0 0 16 16"><path d="M7.3 5.9 A2.6 2.6 0 1 0 7.3 9.7" fill="none" stroke="#388A34" stroke-width="2"/><path d="M9.6 3.5 V9 M11.8 3.5 V9 M8 5 H13.4 M8 7.5 H13.4" fill="none" stroke="#388A34" stroke-width="1.1"/></svg>
<div class="tree" style="left:1136.50px;top:342.5px;letter-spacing:-0.284px">MapSourceRoots.cs</div>
<svg class="a" style="left:1114px;top:362px" width="16" height="16" viewBox="0 0 16 16"><path d="M4.500 7.500 V1.500 H11.500 L14.500 4.500 V14 H8.500" fill="#F0F0F6" stroke="#424242"/><path d="M11.500 1.500 V4.500 H14.500" fill="none" stroke="#424242"/><path d="M5.500 8.500 L6.500 10.600 L8.600 11.600 L6.500 12.600 L5.500 14.700 L4.500 12.600 L2.400 11.600 L4.500 10.600 Z" fill="#F6F6FA" stroke="#424242" stroke-width="0.900"/></svg>
<div class="tree" style="left:1136.50px;top:360.5px;letter-spacing:-0.177px">Microsoft.CSharp.Core.targets</div>
<svg class="a" style="left:1114px;top:380px" width="16" height="16" viewBox="0 0 16 16"><path d="M4.500 7.500 V1.500 H11.500 L14.500 4.500 V14 H8.500" fill="#F0F0F6" stroke="#424242"/><path d="M11.500 1.500 V4.500 H14.500" fill="none" stroke="#424242"/><path d="M5.500 8.500 L6.500 10.600 L8.600 11.600 L6.500 12.600 L5.500 14.700 L4.500 12.600 L2.400 11.600 L4.500 10.600 Z" fill="#F6F6FA" stroke="#424242" stroke-width="0.900"/></svg>
<div class="tree" style="left:1136.50px;top:378.5px;letter-spacing:-0.019px">Microsoft.Managed.Core.targets</div>
<svg class="a" style="left:1114px;top:398px" width="16" height="16" viewBox="0 0 16 16"><path d="M4.500 7.500 V1.500 H11.500 L14.500 4.500 V14 H8.500" fill="#F0F0F6" stroke="#424242"/><path d="M11.500 1.500 V4.500 H14.500" fill="none" stroke="#424242"/><path d="M5.500 8.500 L6.500 10.600 L8.600 11.600 L6.500 12.600 L5.500 14.700 L4.500 12.600 L2.400 11.600 L4.500 10.600 Z" fill="#F6F6FA" stroke="#424242" stroke-width="0.900"/></svg>
<div class="tree" style="left:1136.50px;top:396.5px;letter-spacing:-0.150px">Microsoft.VisualBasic.Core.targets</div>
<svg class="a" style="left:1095.5px;top:418px" width="7" height="11" viewBox="0 0 7 11"><path d="M1 1.800 L4.500 5.500 L1 9.200 Z" fill="none" stroke="#1a1a1a" stroke-width="1.050"/></svg>
<svg class="a" style="left:1116px;top:416px" width="16" height="16" viewBox="0 0 16 16"><path d="M7.3 5.9 A2.6 2.6 0 1 0 7.3 9.7" fill="none" stroke="#388A34" stroke-width="2"/><path d="M9.6 3.5 V9 M11.8 3.5 V9 M8 5 H13.4 M8 7.5 H13.4" fill="none" stroke="#388A34" stroke-width="1.1"/></svg>
<div class="tree" style="left:1136.50px;top:414.5px;letter-spacing:-0.281px">MvidReader.cs</div>
<svg class="a" style="left:1095.5px;top:436px" width="7" height="11" viewBox="0 0 7 11"><path d="M1 1.800 L4.500 5.500 L1 9.200 Z" fill="none" stroke="#1a1a1a" stroke-width="1.050"/></svg>
<svg class="a" style="left:1116px;top:434px" width="16" height="16" viewBox="0 0 16 16"><path d="M7.3 5.9 A2.6 2.6 0 1 0 7.3 9.7" fill="none" stroke="#388A34" stroke-width="2"/><path d="M9.6 3.5 V9 M11.8 3.5 V9 M8 5 H13.4 M8 7.5 H13.4" fill="none" stroke="#388A34" stroke-width="1.1"/><rect x="7.5" y="8.8" width="6" height="5.6" fill="#fff" stroke="#1BA1E2" stroke-width="1"/><path d="M9.3 10.4 H11.7 V12.8 M11.7 10.4 L9.2 12.9" fill="none" stroke="#1BA1E2" stroke-width="1"/></svg>
<div class="tree" style="left:1136.50px;top:432.5px;letter-spacing:0.098px">PlatformInformation.cs</div>
<svg class="a" style="left:1095.5px;top:454px" width="7" height="11" viewBox="0 0 7 11"><path d="M1 1.800 L4.500 5.500 L1 9.200 Z" fill="none" stroke="#1a1a1a" stroke-width="1.050"/></svg>
<svg class="a" style="left:1116px;top:452px" width="16" height="16" viewBox="0 0 16 16"><path d="M7.3 5.9 A2.6 2.6 0 1 0 7.3 9.7" fill="none" stroke="#388A34" stroke-width="2"/><path d="M9.6 3.5 V9 M11.8 3.5 V9 M8 5 H13.4 M8 7.5 H13.4" fill="none" stroke="#388A34" stroke-width="1.1"/></svg>
<div class="tree" style="left:1136.50px;top:450.5px;letter-spacing:-0.037px">PropertyDictionary.cs</div>
<svg class="a" style="left:1095.5px;top:472px" width="7" height="11" viewBox="0 0 7 11"><path d="M1 1.800 L4.500 5.500 L1 9.200 Z" fill="none" stroke="#1a1a1a" stroke-width="1.050"/></svg>
<svg class="a" style="left:1116px;top:470px" width="16" height="16" viewBox="0 0 16 16"><path d="M7.3 5.9 A2.6 2.6 0 1 0 7.3 9.7" fill="none" stroke="#388A34" stroke-width="2"/><path d="M9.6 3.5 V9 M11.8 3.5 V9 M8 5 H13.4 M8 7.5 H13.4" fill="none" stroke="#388A34" stroke-width="1.1"/></svg>
<div class="tree" style="left:1136.50px;top:468.5px;letter-spacing:-0.333px">RCWForCurrentContext.cs</div>
<svg class="a" style="left:1095.5px;top:490px" width="7" height="11" viewBox="0 0 7 11"><path d="M1 1.800 L4.500 5.500 L1 9.200 Z" fill="none" stroke="#1a1a1a" stroke-width="1.050"/></svg>
<svg class="a" style="left:1116px;top:488px" width="16" height="16" viewBox="0 0 16 16"><path d="M7.3 5.9 A2.6 2.6 0 1 0 7.3 9.7" fill="none" stroke="#388A34" stroke-width="2"/><path d="M9.6 3.5 V9 M11.8 3.5 V9 M8 5 H13.4 M8 7.5 H13.4" fill="none" stroke="#388A34" stroke-width="1.1"/><rect x="7.5" y="8.8" width="6" height="5.6" fill="#fff" stroke="#1BA1E2" stroke-width="1"/><path d="M9.3 10.4 H11.7 V12.8 M11.7 10.4 L9.2 12.9" fill="none" stroke="#1BA1E2" stroke-width="1"/></svg>
<div class="tree" style="left:1136.50px;top:486.5px;letter-spacing:-0.108px">ReflectionUtilities.cs</div>
<svg class="a" style="left:1116px;top:506px" width="16" height="16" viewBox="0 0 16 16"><path d="M7.3 5.9 A2.6 2.6 0 1 0 7.3 9.7" fill="none" stroke="#388A34" stroke-width="2"/><path d="M9.6 3.5 V9 M11.8 3.5 V9 M8 5 H13.4 M8 7.5 H13.4" fill="none" stroke="#388A34" stroke-width="1.1"/></svg>
<div class="tree" style="left:1136.50px;top:504.5px;letter-spacing:-0.197px">RuntimeTextTemplate1.cs</div>
<svg class="a" style="left:1095.5px;top:526px" width="7" height="11" viewBox="0 0 7 11"><path d="M1 1.800 L4.500 5.500 L1 9.200 Z" fill="none" stroke="#1a1a1a" stroke-width="1.050"/></svg>
<svg class="a" style="left:1116px;top:524px" width="16" height="16" viewBox="0 0 16 16"><path d="M7.3 5.9 A2.6 2.6 0 1 0 7.3 9.7" fill="none" stroke="#388A34" stroke-width="2"/><path d="M9.6 3.5 V9 M11.8 3.5 V9 M8 5 H13.4 M8 7.5 H13.4" fill="none" stroke="#388A34" stroke-width="1.1"/><rect x="7.5" y="8.8" width="6" height="5.6" fill="#fff" stroke="#1BA1E2" stroke-width="1"/><path d="M9.3 10.4 H11.7 V12.8 M11.7 10.4 L9.2 12.9" fill="none" stroke="#1BA1E2" stroke-width="1"/></svg>
<div class="tree" style="left:1136.50px;top:522.5px;letter-spacing:-0.055px">UnicodeCharacterUtilities.cs</div>
<svg class="a" style="left:1095.5px;top:544px" width="7" height="11" viewBox="0 0 7 11"><path d="M1 1.800 L4.500 5.500 L1 9.200 Z" fill="none" stroke="#1a1a1a" stroke-width="1.050"/></svg>
<svg class="a" style="left:1116px;top:542px" width="16" height="16" viewBox="0 0 16 16"><path d="M7.3 5.9 A2.6 2.6 0 1 0 7.3 9.7" fill="none" stroke="#388A34" stroke-width="2"/><path d="M9.6 3.5 V9 M11.8 3.5 V9 M8 5 H13.4 M8 7.5 H13.4" fill="none" stroke="#388A34" stroke-width="1.1"/></svg>
<div class="tree" style="left:1136.50px;top:540.5px;letter-spacing:-0.165px">Utilities.cs</div>
<svg class="a" style="left:1095.5px;top:562px" width="7" height="11" viewBox="0 0 7 11"><path d="M1 1.800 L4.500 5.500 L1 9.200 Z" fill="none" stroke="#1a1a1a" stroke-width="1.050"/></svg>
<svg class="a" style="left:1116px;top:560px" width="16" height="16" viewBox="0 0 16 16"><path d="M7.3 5.9 A2.6 2.6 0 1 0 7.3 9.7" fill="none" stroke="#388A34" stroke-width="2"/><path d="M9.6 3.5 V9 M11.8 3.5 V9 M8 5 H13.4 M8 7.5 H13.4" fill="none" stroke="#388A34" stroke-width="1.1"/></svg>
<div class="tree" style="left:1136.50px;top:558.5px;letter-spacing:-0.209px">ValidateBootstrap.cs</div>
<svg class="a" style="left:1095.5px;top:580px" width="7" height="11" viewBox="0 0 7 11"><path d="M1 1.800 L4.500 5.500 L1 9.200 Z" fill="none" stroke="#1a1a1a" stroke-width="1.050"/></svg>
<svg class="a" style="left:1116px;top:578px" width="16" height="16" viewBox="0 0 16 16"><path d="M7.3 5.9 A2.6 2.6 0 1 0 7.3 9.7" fill="none" stroke="#388A34" stroke-width="2"/><path d="M9.6 3.5 V9 M11.8 3.5 V9 M8 5 H13.4 M8 7.5 H13.4" fill="none" stroke="#388A34" stroke-width="1.1"/></svg>
<div class="tree" style="left:1136.50px;top:576.5px;letter-spacing:-0.542px">Vbc.cs</div>
<svg class="a" style="left:1095.5px;top:598px" width="7" height="11" viewBox="0 0 7 11"><path d="M1 1.800 L4.500 5.500 L1 9.200 Z" fill="none" stroke="#1a1a1a" stroke-width="1.050"/></svg>
<svg class="a" style="left:1116px;top:596px" width="16" height="16" viewBox="0 0 16 16"><path d="M7.3 5.9 A2.6 2.6 0 1 0 7.3 9.7" fill="none" stroke="#388A34" stroke-width="2"/><path d="M9.6 3.5 V9 M11.8 3.5 V9 M8 5 H13.4 M8 7.5 H13.4" fill="none" stroke="#388A34" stroke-width="1.1"/></svg>
<div class="tree" style="left:1136.50px;top:594.5px;letter-spacing:-0.432px">Visualizer1.cs</div>
<svg class="a" style="left:1077.5px;top:616px" width="7" height="11" viewBox="0 0 7 11"><path d="M1 1.800 L4.500 5.500 L1 9.200 Z" fill="none" stroke="#1a1a1a" stroke-width="1.050"/></svg>
<svg class="a" style="left:1098px;top:616px" width="15" height="13" viewBox="0 0 15 13"><rect x="0.500" y="0.500" width="13" height="11" fill="#EDEDF5" stroke="#2F8A2F"/><path d="M6.400 4.300 A2.300 2.600 0 1 0 6.400 7.900" fill="none" stroke="#3c3c3c" stroke-width="1.100"/><path d="M8.900 3.200 L8.500 8.600 M10.900 3.200 L10.500 8.600 M7.300 4.900 H12.200 M7.100 6.900 H12" fill="none" stroke="#3c3c3c" stroke-width="1"/></svg>
<div class="tree" style="left:1118.60px;top:612.5px;letter-spacing:-0.089px">Microsoft.Build.Tasks.CodeAnalysis.UnitTests</div>
<svg class="a" style="left:1077.5px;top:634px" width="7" height="11" viewBox="0 0 7 11"><path d="M1 1.800 L4.500 5.500 L1 9.200 Z" fill="none" stroke="#1a1a1a" stroke-width="1.050"/></svg>
<svg class="a" style="left:1098px;top:634px" width="15" height="13" viewBox="0 0 15 13"><rect x="0.500" y="0.500" width="13" height="11" fill="#EDEDF5" stroke="#2F8A2F"/><path d="M6.400 4.300 A2.300 2.600 0 1 0 6.400 7.900" fill="none" stroke="#3c3c3c" stroke-width="1.100"/><path d="M8.900 3.200 L8.500 8.600 M10.900 3.200 L10.500 8.600 M7.300 4.900 H12.200 M7.100 6.900 H12" fill="none" stroke="#3c3c3c" stroke-width="1"/></svg>
<div class="tree" style="left:1118.60px;top:630.5px;letter-spacing:-0.066px">Microsoft.CodeAnalysis</div>
</div></div>
<div class="a" style="left:1256px;top:108px;width:17px;height:538px;background:#E8E8EC"></div>
<svg class="a" style="left:1260px;top:114px" width="9" height="5" viewBox="0 0 9 5"><path d="M0 5 L4.500 0 L9 5 Z" fill="#8F8F98"/></svg>
<div class="a" style="left:1260px;top:192px;width:9px;height:162px;background:#C2C3C9"></div>
<svg class="a" style="left:1260px;top:635px" width="9" height="5" viewBox="0 0 9 5"><path d="M0 0 L4.500 5 L9 0 Z" fill="#8F8F98"/></svg>
<div class="a" style="left:1031px;top:646px;width:242px;height:17px;background:#E8E8EC"></div>
<svg class="a" style="left:1037px;top:650px" width="5" height="9" viewBox="0 0 5 9"><path d="M5 0 L0 4.500 L5 9 Z" fill="#8F8F98"/></svg>
<div class="a" style="left:1048px;top:650px;width:132px;height:9px;background:#C2C3C9"></div>
<svg class="a" style="left:1246px;top:650px" width="5" height="9" viewBox="0 0 5 9"><path d="M0 0 L5 4.500 L0 9 Z" fill="#8F8F98"/></svg>
</div></div>
<div class="a" style="left:1031px;top:663px;width:99px;height:20px;background:#F8F9FE"></div>
<div class="a" style="left:1036.00px;top:665px;font-size:12px;line-height:16px;color:#1e1e1e;letter-spacing:-0.117px;">Solution Explorer</div>
<div class="a" style="left:1130px;top:664px;width:86px;height:18.5px;background:#40508D"></div>
<div class="a" style="left:1138.00px;top:665px;font-size:12px;line-height:16px;color:#fff;letter-spacing:-0.364px;">Team Explorer</div>
<div class="a" style="left:0;top:690px;width:1280px;height:21px;background:#40508D"></div>
<svg class="a" style="left:2px;top:696px" width="18" height="13" viewBox="0 0 18 13"><path d="M3.800 1.600 H16.600 L14.200 11.400 H1.300 Z" fill="none" stroke="#fff" stroke-width="1.200"/><path d="M5.600 4.200 H13.200" stroke="#fff" stroke-width="1"/></svg>
<div class="a" style="left:27.50px;top:694px;font-size:12px;line-height:16px;color:#fff;letter-spacing:-0.798px;">Ready</div>
<svg class="a" style="left:957.5px;top:696.5px" width="11" height="12" viewBox="0 0 11 12"><path d="M5.500 11.500 V2 M1.500 5.500 L5.500 1.500 L9.500 5.500" fill="none" stroke="#F4F1E6" stroke-width="1.900"/></svg>
<div class="a" style="left:977.00px;top:694px;font-size:12px;line-height:16px;color:#fff;">0</div>
<svg class="a" style="left:1006px;top:695px" width="14" height="13" viewBox="0 0 14 13"><path d="M10 1 L13 4 L5 12 L1.500 12.500 L2 9 Z" fill="#C9CFE6"/><path d="M9 2 L12 5" stroke="#40508D" stroke-width="0.800"/></svg>
<div class="a" style="left:1027.00px;top:694px;font-size:12px;line-height:16px;color:#fff;">8</div>
<svg class="a" style="left:1055px;top:694px" width="16" height="16" viewBox="0 0 16 16"><path d="M8 0.500 L15.500 8 L8 15.500 L0.500 8 Z" fill="#D9DEEF"/><path d="M6 3.500 L9.500 7 M8 5.500 V11.500" stroke="#40508D" stroke-width="1.200" fill="none"/><circle cx="8" cy="11.500" r="1.300" fill="#40508D"/><circle cx="10" cy="7.500" r="1.300" fill="#40508D"/><circle cx="8" cy="5.200" r="1.200" fill="#40508D"/></svg>
<div class="a" style="left:1077.00px;top:694px;font-size:12px;line-height:16px;color:#fff;">roslyn</div>
<svg class="a" style="left:1132px;top:694.7px" width="14" height="14" viewBox="0 0 14 14"><path d="M7 13 V7.500 L2.400 2.900 M7 7.500 L11.600 2.900" fill="none" stroke="#EDEBE0" stroke-width="1.900"/><path d="M0.300 1 H4.900 L0.300 5.600 Z M13.700 1 H9.100 L13.700 5.600 Z" fill="#EDEBE0"/></svg>
<div class="a" style="left:1153.00px;top:694px;font-size:12px;line-height:16px;color:#fff;">master</div>
<svg class="a" style="left:1194.5px;top:699.7px" width="9" height="5" viewBox="0 0 9 5"><path d="M0 5 L4.500 0 L9 5 Z" fill="#fff"/></svg>
<svg class="a" style="left:1228px;top:693px" width="16" height="16" viewBox="0 0 16 16"><path d="M8 1 C4.500 1 4 4 4 7 C4 9.500 2.500 10.500 1.500 11.500 H14.500 C13.500 10.500 12 9.500 12 7 C12 4 11.500 1 8 1 Z" fill="#DDDCE2"/><rect x="6" y="13" width="4" height="2" fill="#DDDCE2"/></svg>
<div class="a" style="left:1274px;top:700px;width:1px;height:1px;background:#8C97C4"></div>
<div class="a" style="left:1272px;top:702px;width:1px;height:1px;background:#8C97C4"></div>
<div class="a" style="left:1274px;top:702px;width:1px;height:1px;background:#8C97C4"></div>
<div class="a" style="left:1270px;top:704px;width:1px;height:1px;background:#8C97C4"></div>
<div class="a" style="left:1272px;top:704px;width:1px;height:1px;background:#8C97C4"></div>
<div class="a" style="left:1274px;top:704px;width:1px;height:1px;background:#8C97C4"></div>
<div class="a" style="left:1268px;top:706px;width:1px;height:1px;background:#8C97C4"></div>
<div class="a" style="left:1270px;top:706px;width:1px;height:1px;background:#8C97C4"></div>
<div class="a" style="left:1272px;top:706px;width:1px;height:1px;background:#8C97C4"></div>
<div class="a" style="left:1274px;top:706px;width:1px;height:1px;background:#8C97C4"></div>
</body></html>
